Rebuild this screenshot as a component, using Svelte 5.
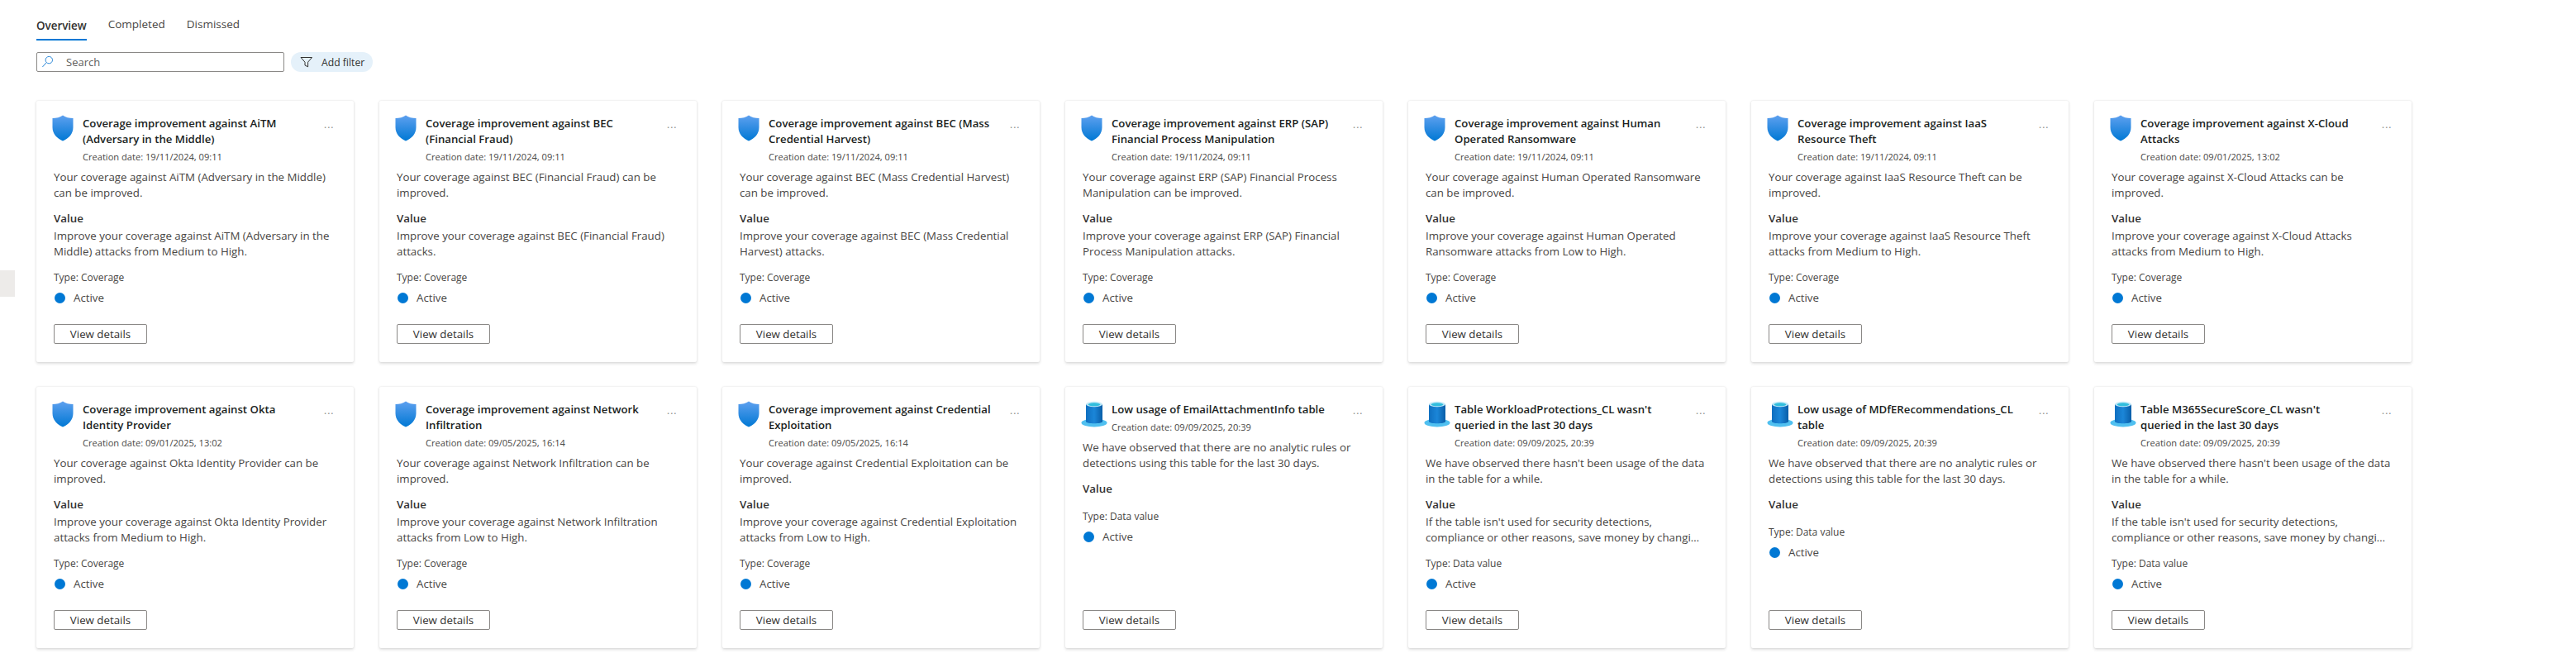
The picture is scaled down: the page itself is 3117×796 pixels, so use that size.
<script>
  const coverage = (name, date, level) => ({
    kind: 'shield',
    title: `Coverage improvement against ${name}`,
    date,
    desc: `Your coverage against ${name} can be improved.`,
    value: level
      ? `Improve your coverage against ${name} attacks from ${level} to High.`
      : `Improve your coverage against ${name} attacks.`,
    type: 'Coverage'
  });

  const unusedValue = "If the table isn't used for security detections, compliance or other reasons, save money by changing the table plan.";
  const lowDesc = 'We have observed that there are no analytic rules or detections using this table for the last 30 days.';
  const staleDesc = "We have observed there hasn't been usage of the data in the table for a while.";
  const table = (title, desc, value) => ({
    kind: 'table',
    title,
    date: '09/09/2025, 20:39',
    desc,
    value,
    type: 'Data value'
  });

  const cards = [
    coverage('AiTM (Adversary in the Middle)', '19/11/2024, 09:11', 'Medium'),
    coverage('BEC (Financial Fraud)', '19/11/2024, 09:11'),
    coverage('BEC (Mass Credential Harvest)', '19/11/2024, 09:11'),
    coverage('ERP (SAP) Financial Process Manipulation', '19/11/2024, 09:11'),
    coverage('Human Operated Ransomware', '19/11/2024, 09:11', 'Low'),
    coverage('IaaS Resource Theft', '19/11/2024, 09:11', 'Medium'),
    coverage('X-Cloud Attacks', '09/01/2025, 13:02', 'Medium'),
    coverage('Okta Identity Provider', '09/01/2025, 13:02', 'Medium'),
    coverage('Network Infiltration', '09/05/2025, 16:14', 'Low'),
    coverage('Credential Exploitation', '09/05/2025, 16:14', 'Low'),
    table('Low usage of EmailAttachmentInfo table', lowDesc, ''),
    table("Table WorkloadProtections_CL wasn't queried in the last 30 days", staleDesc, unusedValue),
    table('Low usage of MDfERecommendations_CL table', lowDesc, ''),
    table("Table M365SecureScore_CL wasn't\nqueried in the last 30 days", staleDesc, unusedValue)
  ];
</script>

<div class="page">
  <div class="rail"></div>

  <nav class="tabs">
    <span class="tab active">Overview</span>
    <span class="tab">Completed</span>
    <span class="tab">Dismissed</span>
  </nav>

  <div class="toolbar">
    <div class="search">
      <svg width="16" height="16" viewBox="0 0 16 16" fill="none" stroke="#2b88d8" stroke-width="1">
        <circle cx="9.3" cy="5.6" r="4.2" />
        <path d="M6.2 8.6 L1.4 14" />
      </svg>
      <span>Search</span>
    </div>
    <div class="filter">
      <svg width="16" height="16" viewBox="0 0 16 16" fill="none" stroke="#323130" stroke-width="1">
        <path d="M1 2.5h13.5L9.6 8.2v5.6L6 12V8.2z" />
      </svg>
      <span>Add filter</span>
    </div>
  </div>

  <div class="grid">
    {#each cards as card}
      <article class="card">
        <header>
          <div class="icon">
            {#if card.kind === 'shield'}
              <svg width="26" height="32" viewBox="0 0 26 32">
                <defs>
                  <linearGradient id="shield" x1="0" y1="0" x2="0" y2="1">
                    <stop offset="0" stop-color="#5ea0ef" />
                    <stop offset="1" stop-color="#0078d4" />
                  </linearGradient>
                </defs>
                <path d="M13 0.5 C10 3 5 4 0.5 4 V15 C0.5 23 6 28.5 13 31.5 C20 28.5 25.5 23 25.5 15 V4 C21 4 16 3 13 0.5 Z" fill="url(#shield)" />
              </svg>
            {:else}
              <svg width="32" height="32" viewBox="0 0 32 32">
                <defs>
                  <linearGradient id="can" x1="0" y1="0" x2="1" y2="0">
                    <stop offset="0" stop-color="#0f6fc0" />
                    <stop offset="0.5" stop-color="#1b86d8" />
                    <stop offset="1" stop-color="#0a5ea8" />
                  </linearGradient>
                </defs>
                <ellipse cx="16" cy="26.5" rx="15.5" ry="5" fill="#50c0f0" />
                <path d="M6 4 V25 C6 28 26 28 26 25 V4 Z" fill="url(#can)" />
                <ellipse cx="16" cy="4" rx="10" ry="3.2" fill="#c3e9f8" />
                <ellipse cx="16" cy="4.3" rx="7.5" ry="2" fill="#32bedd" />
              </svg>
            {/if}
          </div>
          <div class="heading">
            <h3>{card.title}</h3>
            <p class="date">Creation date: {card.date}</p>
          </div>
          <span class="more">...</span>
        </header>

        <p class="desc">{card.desc}</p>

        <h4>Value</h4>
        {#if card.value}
          <p class="value">{card.value}</p>
        {/if}

        <p class="type" class:empty={!card.value}>Type: {card.type}</p>
        <div class="status"><i></i><span>Active</span></div>

        <button>View details</button>
      </article>
    {/each}
  </div>
</div>

<style>
  :global(body) {
    background: #fff;
    overflow: hidden;
  }

  .page {
    position: relative;
    width: 3117px;
    height: 796px;
    padding: 0 0 0 44px;
    box-sizing: border-box;
    font-family: "Open Sans", "Noto Sans", sans-serif;
    font-size: 13.3px;
    line-height: 19px;
    color: #323130;
  }

  .rail {
    position: absolute;
    left: 0;
    top: 327px;
    width: 18px;
    height: 32px;
    background: #edebe9;
  }

  .tabs {
    display: flex;
    gap: 26px;
    padding-top: 20px;
    height: 27px;
  }

  .tab {
    font-size: 13.5px;
    height: 27px;
    color: #484644;
  }

  .tab.active {
    font-size: 13.4px;
    font-weight: 600;
    color: #323130;
    padding-top: 2px;
    height: 25px;
    border-bottom: 2px solid #0078d4;
  }

  .toolbar {
    display: flex;
    gap: 8px;
    margin-top: 16px;
  }

  .search {
    display: flex;
    align-items: center;
    gap: 14px;
    width: 300px;
    height: 24px;
    box-sizing: border-box;
    padding-left: 5px;
    border: 1px solid #8a8886;
    border-radius: 2px;
    color: #605e5c;
    font-size: 13px;
  }

  .filter {
    display: flex;
    align-items: center;
    gap: 10px;
    width: 99px;
    height: 24px;
    box-sizing: border-box;
    padding-left: 11px;
    border-radius: 12px;
    background: #e5f1fa;
    font-size: 12.2px;
  }

  .grid {
    display: grid;
    grid-template-columns: repeat(7, 384px);
    grid-auto-rows: 316px;
    gap: 30px 31px;
    margin-top: 35px;
  }

  .card {
    display: flex;
    flex-direction: column;
    box-sizing: border-box;
    padding: 18px 22px 22px 21px;
    border-radius: 2px;
    box-shadow: 0 1.6px 3.6px rgba(0, 0, 0, 0.13), 0 0 2px rgba(0, 0, 0, 0.1);
  }

  header {
    display: flex;
    margin-left: -2px;
  }

  .icon {
    flex: none;
    width: 37px;
    height: 32px;
    margin-top: -1px;
  }

  .heading {
    flex: none;
    width: 274px;
  }

  h3 {
    margin: 0;
    font-size: 13.2px;
    font-weight: 600;
    color: #201f1e;
    white-space: pre-line;
  }

  .date {
    margin: 2px 0 0;
    font-size: 11.1px;
    color: #484644;
  }

  .more {
    flex: none;
    margin: 1px 0 0 18px;
    color: #8a8886;
    font-size: 12px;
    letter-spacing: 1px;
  }

  p {
    margin: 0;
  }

  .desc {
    margin-top: 6px;
    color: #484644;
  }

  h4 {
    margin: 12px 0 0;
    font-size: 13.3px;
    font-weight: 600;
    color: #323130;
  }

  .value {
    max-width: 338px;
    margin-top: 2px;
    color: #484644;
    display: -webkit-box;
    -webkit-box-orient: vertical;
    -webkit-line-clamp: 2;
    overflow: hidden;
  }

  .type {
    margin-top: 12px;
    font-size: 12px;
    color: #484644;
  }

  .type.empty {
    margin-top: 14px;
  }

  .status {
    display: flex;
    align-items: center;
    gap: 10px;
    margin-top: 6px;
    color: #484644;
  }

  .status i {
    width: 13px;
    height: 13px;
    margin-left: 1px;
    border-radius: 50%;
    background: #0078d4;
  }

  button {
    width: 113px;
    height: 24px;
    margin-top: auto;
    padding: 0;
    border: 1px solid #8a8886;
    border-radius: 2px;
    background: #fff;
    font: inherit;
    color: #323130;
  }
</style>
